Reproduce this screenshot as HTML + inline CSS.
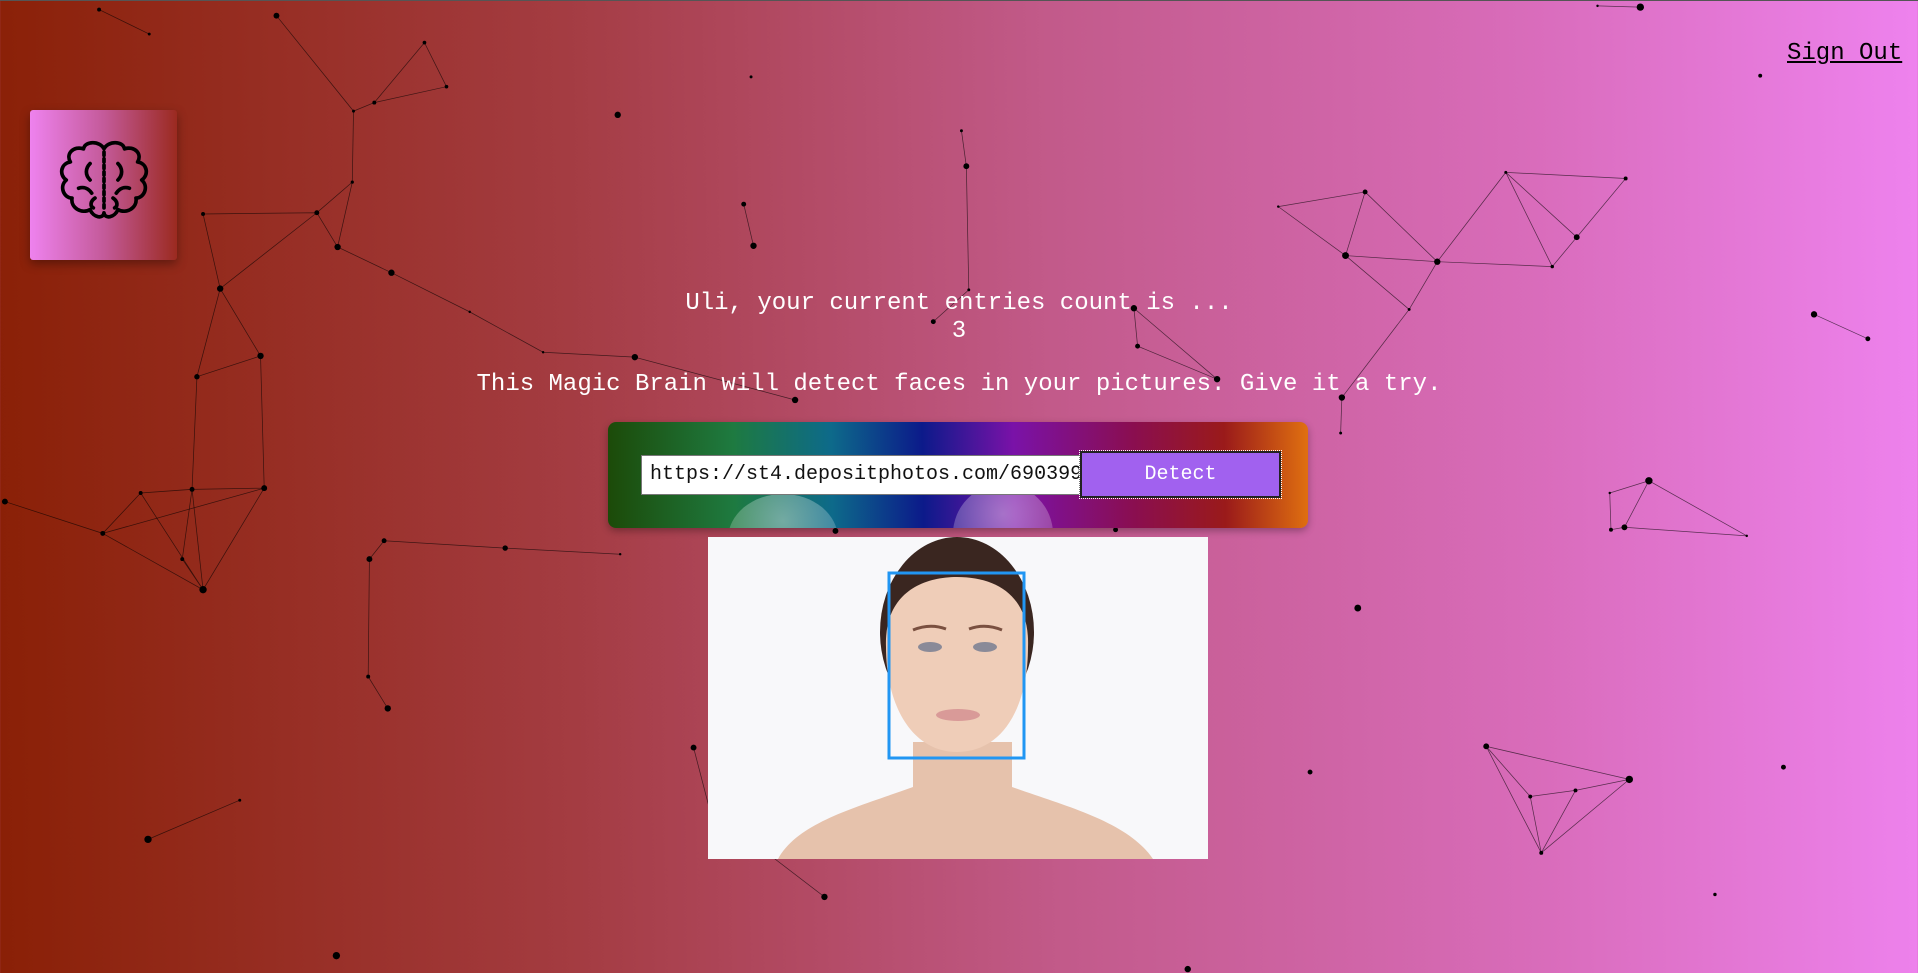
<!DOCTYPE html>
<html><head><meta charset="utf-8"><style>
html,body{margin:0;padding:0;width:1918px;height:973px;overflow:hidden}
body{background:linear-gradient(89deg,#8a2006 0%,#a43c42 30%,#c25a8a 55%,#d96cbb 80%,#ee82ee 100%);font-family:"Liberation Mono",monospace;position:relative;border-top:1px solid #555;box-sizing:border-box}
#particles{position:absolute;left:0;top:0;width:1918px;height:973px}
.logo{position:absolute;left:30px;top:109px;width:147px;height:150px;border-radius:3px;background:linear-gradient(90deg,#ee82ee,#c45a9a 50%,#9b2a20);box-shadow:0 4px 10px rgba(0,0,0,.35)}
.signout{position:absolute;left:1787px;top:39px;font-size:24px;color:#000;text-decoration:underline}
.t{position:absolute;left:0;width:1918px;text-align:center;color:#fff}
.form{position:absolute;left:608px;top:421px;width:700px;height:106px;border-radius:8px;overflow:hidden;background:linear-gradient(89deg,#1c4a08 0%,#1e7a40 18%,#0d6a8a 32%,#0c1a8a 45%,#7a12a8 58%,#8a0e50 75%,#9a1a1a 88%,#e07010 100%);box-shadow:0 3px 8px rgba(0,0,0,.3)}
.input{position:absolute;left:33px;top:33px;width:439px;height:40px;background:#fff;border:1px solid #777;box-sizing:border-box;font-size:20px;line-height:38px;padding-left:8px;white-space:nowrap;overflow:hidden;color:#111}
.btn{position:absolute;left:472px;top:29px;width:201px;height:47px;background:#a161ef;border:2px solid #222;outline:1px dotted #fff;box-sizing:border-box;color:#fff;font-size:20px;text-align:center;line-height:43px}
.bub{position:absolute;border-radius:50%;background:radial-gradient(circle at 50% 30%,rgba(255,255,255,.4),rgba(255,255,255,.1));}
.photo{position:absolute;left:708px;top:536px;width:500px;height:322px}
</style></head><body>
<svg id="particles" viewBox="0 0 1568 795" preserveAspectRatio="none">
<g stroke="#000" stroke-width="0.6" stroke-opacity="0.6" fill="none">
<polyline points="81,7 122,27"/><polyline points="226,12 289,90 306,83 347,34 365,70 306,83"/><polyline points="289,90 288,148 276,201 259,173 288,148"/>
<polyline points="259,173 180,235 213,290 161,307 180,235 166,174 259,173"/><polyline points="276,201 320,222 384,254 444,287 519,291 650,326"/>
<polyline points="161,307 157,399 216,398 213,290"/><polyline points="4,409 84,435 115,402 157,399 149,456 166,481 115,402"/><polyline points="84,435 216,398 166,481 84,435"/><polyline points="157,399 166,481"/>
<polyline points="302,456 314,441 413,447 507,452"/><polyline points="302,456 301,552 317,578"/><polyline points="121,685 196,653"/>
<polyline points="608,166 616,200"/><polyline points="786,106 790,135 792,236 763,262"/><polyline points="927,251 930,282 995,309 927,251"/><polyline points="1097,324 1096,353"/>
<polyline points="1045,168 1116,156 1100,208 1175,213 1152,252 1100,208 1045,168"/><polyline points="1116,156 1175,213 1231,140 1289,193 1269,217 1231,140 1329,145 1289,193"/><polyline points="1175,213 1269,217"/><polyline points="1152,252 1097,324"/>
<polyline points="1306,4 1341,5"/><polyline points="1483,256 1527,276"/><polyline points="1316,402 1348,392 1328,430 1317,432 1316,402"/><polyline points="1348,392 1428,437 1328,430"/>
<polyline points="1215,609 1251,650 1288,645 1332,636 1260,696 1251,650"/><polyline points="1215,609 1260,696 1288,645"/><polyline points="1215,609 1332,636"/>
<polyline points="567,610 580,660 674,732"/>
</g>
<g fill="#000">
<circle cx="81" cy="7" r="1.6"/><circle cx="122" cy="27" r="1.2"/><circle cx="226" cy="12" r="2.4"/><circle cx="347" cy="34" r="1.5"/><circle cx="365" cy="70" r="1.5"/><circle cx="306" cy="83" r="1.6"/><circle cx="289" cy="90" r="1.2"/><circle cx="288" cy="148" r="1.3"/><circle cx="259" cy="173" r="2"/><circle cx="276" cy="201" r="2.6"/><circle cx="320" cy="222" r="2.6"/><circle cx="166" cy="174" r="1.6"/><circle cx="180" cy="235" r="2.6"/><circle cx="213" cy="290" r="2.6"/><circle cx="161" cy="307" r="2.2"/><circle cx="384" cy="254" r="1"/><circle cx="444" cy="287" r="1"/><circle cx="519" cy="291" r="2.6"/><circle cx="650" cy="326" r="2.6"/><circle cx="505" cy="93" r="2.6"/><circle cx="614" cy="62" r="1.2"/><circle cx="608" cy="166" r="2"/><circle cx="616" cy="200" r="2.6"/><circle cx="786" cy="106" r="1.2"/><circle cx="790" cy="135" r="2.4"/><circle cx="792" cy="236" r="1.2"/><circle cx="763" cy="262" r="2"/><circle cx="927" cy="251" r="2.6"/><circle cx="930" cy="282" r="2"/><circle cx="995" cy="309" r="2.6"/><circle cx="1097" cy="324" r="2.6"/><circle cx="1096" cy="353" r="1.2"/><circle cx="1045" cy="168" r="1"/><circle cx="1116" cy="156" r="2"/><circle cx="1100" cy="208" r="2.8"/><circle cx="1175" cy="213" r="2.6"/><circle cx="1152" cy="252" r="1.2"/><circle cx="1231" cy="140" r="1.2"/><circle cx="1289" cy="193" r="2.4"/><circle cx="1269" cy="217" r="1.4"/><circle cx="1329" cy="145" r="1.6"/><circle cx="1341" cy="5" r="3"/><circle cx="1306" cy="4" r="1"/><circle cx="1439" cy="61" r="1.6"/><circle cx="1483" cy="256" r="2.6"/><circle cx="1527" cy="276" r="2"/><circle cx="1316" cy="402" r="1"/><circle cx="1348" cy="392" r="3"/><circle cx="1328" cy="430" r="2.4"/><circle cx="1317" cy="432" r="1.6"/><circle cx="1428" cy="437" r="1"/><circle cx="1110" cy="496" r="2.8"/><circle cx="1215" cy="609" r="2.4"/><circle cx="1251" cy="650" r="1.6"/><circle cx="1288" cy="645" r="1.6"/><circle cx="1332" cy="636" r="3"/><circle cx="1260" cy="696" r="1.6"/><circle cx="1071" cy="630" r="2"/><circle cx="1458" cy="626" r="2"/><circle cx="1402" cy="730" r="1.4"/><circle cx="971" cy="791" r="2.6"/><circle cx="912" cy="432" r="2"/><circle cx="683" cy="433" r="2.4"/><circle cx="674" cy="732" r="2.6"/><circle cx="567" cy="610" r="2.4"/><circle cx="4" cy="409" r="2.4"/><circle cx="84" cy="435" r="2"/><circle cx="115" cy="402" r="1.6"/><circle cx="157" cy="399" r="2"/><circle cx="216" cy="398" r="2.4"/><circle cx="149" cy="456" r="1.6"/><circle cx="166" cy="481" r="3"/><circle cx="302" cy="456" r="2.4"/><circle cx="314" cy="441" r="2"/><circle cx="413" cy="447" r="2.2"/><circle cx="507" cy="452" r="1"/><circle cx="301" cy="552" r="1.6"/><circle cx="317" cy="578" r="2.6"/><circle cx="121" cy="685" r="3"/><circle cx="196" cy="653" r="1.2"/><circle cx="275" cy="780" r="3"/>
</g>
</svg>

<div class="logo">
<svg width="147" height="150" viewBox="0 0 147 150"><g transform="translate(74,70) scale(0.82) translate(-73,-76)" fill="none" stroke="#000" stroke-width="4.5" stroke-linecap="round" stroke-linejoin="round">
<path d="M73 38 C68 28 50 28 48 38 C36 34 26 44 32 54 C20 56 18 70 27 76 C18 84 24 98 34 98 C32 110 46 118 56 112 C60 122 72 124 73 116 C74 124 86 122 90 112 C100 118 114 110 112 98 C122 98 128 84 119 76 C128 70 126 56 114 54 C120 44 110 34 98 38 C96 28 78 28 73 38 Z"/>
<path d="M73 42 V114" stroke-dasharray="4 4"/>
<path d="M56 56 C50 62 50 70 56 76"/><path d="M90 56 C96 62 96 70 90 76"/>
<path d="M42 86 C48 84 54 86 58 92"/><path d="M104 86 C98 84 92 86 88 92"/>
<path d="M62 98 C56 102 56 108 60 110"/><path d="M84 98 C90 102 90 108 86 110"/>
</g></svg>
</div>

<div class="signout">Sign Out</div>
<div class="t" style="top:289px;font-size:24px;line-height:28px">Uli, your current entries count is ...</div>
<div class="t" style="top:317px;font-size:24px;line-height:28px">3</div>
<div class="t" style="top:369px;font-size:24px;line-height:30px">This Magic Brain will detect faces in your pictures. Give it a try.</div>

<div class="form">
<div class="bub" style="left:120px;top:72px;width:110px;height:90px"></div>
<div class="bub" style="left:345px;top:62px;width:100px;height:100px"></div>
<div class="input">https://st4.depositphotos.com/690399</div>
<div class="btn">Detect</div>
</div>

<svg class="photo" viewBox="0 0 500 322">
<rect width="500" height="322" fill="#f8f8fa"/>
<path d="M70 322 C90 285 150 270 205 250 L205 205 L304 205 L304 250 C360 270 420 285 445 322 Z" fill="#e6c2ac"/>
<ellipse cx="249" cy="95" rx="77" ry="95" fill="#3a2620"/>
<path d="M178 110 C176 60 210 40 249 40 C290 40 322 60 320 110 C320 170 295 215 249 215 C205 215 178 170 178 110 Z" fill="#efcdb8"/>
<ellipse cx="222" cy="110" rx="12" ry="5" fill="#8a8a98"/><ellipse cx="277" cy="110" rx="12" ry="5" fill="#8a8a98"/>
<path d="M205 93 Q222 86 238 92 M261 92 Q277 86 294 93" stroke="#7a5040" stroke-width="3" fill="none"/>
<ellipse cx="250" cy="178" rx="22" ry="6" fill="#d99a98"/>
<rect x="181" y="36" width="135" height="185" fill="none" stroke="#2196f3" stroke-width="3"/>
</svg>
</body></html>
